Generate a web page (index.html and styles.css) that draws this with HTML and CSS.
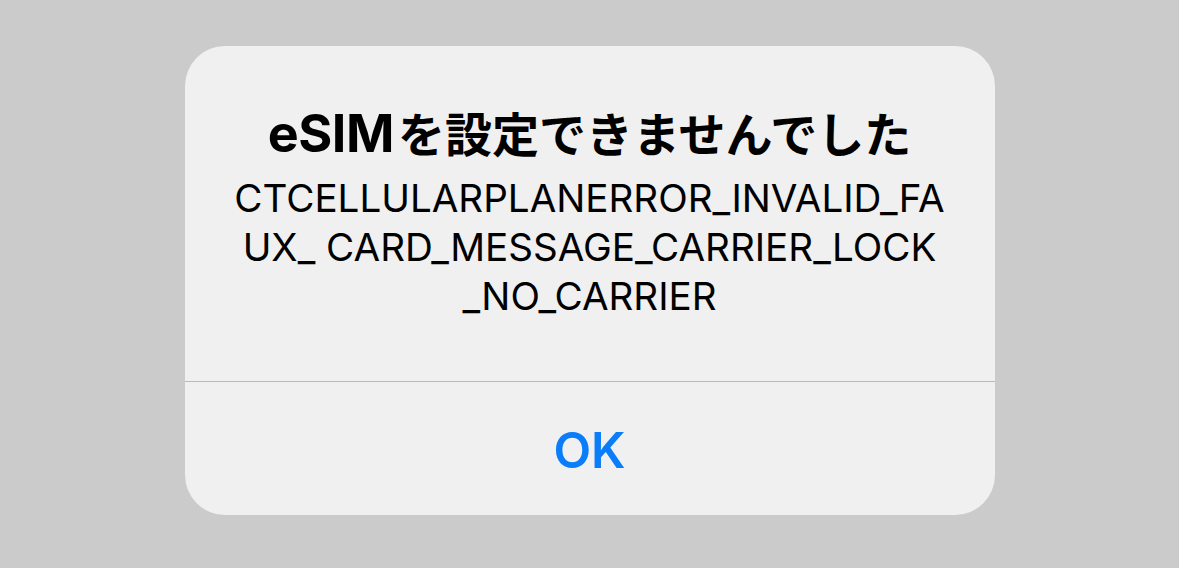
FILE: index.html
```html
<!DOCTYPE html>
<html lang="ja">
<head>
  <meta charset="UTF-8">
  <meta name="viewport" content="width=device-width, initial-scale=1.0">
  <title>eSIM</title>
  <link rel="stylesheet" href="styles.css">
</head>
<body>

  <div class="alert">
    <div class="alert-body">
      <h2 class="alert-title"><span class="latin">eSIM</span><span class="kana">を設定できませんでした</span></h2>
      <div class="alert-message">
        <div>CTCELLULARPLANERROR_INVALID_FA</div>
        <div>UX_ CARD_MESSAGE_CARRIER_LOCK</div>
        <div>_NO_CARRIER</div>
      </div>
    </div>
    <button class="alert-button" type="button">OK</button>
  </div>

</body>
</html>
```

FILE: styles.css
```css
body { margin: 0; height: 568px; background: #cbcbcb; font-family: Inter, "Noto Sans CJK JP", sans-serif; display: flex; justify-content: center; align-items: flex-start; }
.alert { margin-top: 46px; width: 810px; height: 469px; background: #f0f0f0; border-radius: 40px; display: flex; flex-direction: column; overflow: hidden; }
.alert-body { padding: 59px 20px 60px; border-bottom: 1px solid #b9b9b9; text-align: center; }
.alert-title { margin: 0; font-size: 52px; line-height: 54px; font-weight: 700; color: #000; }
.alert-title .latin { letter-spacing: -0.5px; margin-right: 4px; }
.alert-title .kana { font-family: "Noto Sans CJK JP", sans-serif; font-size: 47px; font-weight: 700; }
.alert-message { margin-top: 13px; font-size: 38.6px; line-height: 49px; color: #000; }
.alert-button { flex: 1; border: none; background: none; font-family: Inter, sans-serif; font-size: 49px; font-weight: 600; color: #0a7dfb; padding: 4px 0 0; cursor: pointer; }
```
